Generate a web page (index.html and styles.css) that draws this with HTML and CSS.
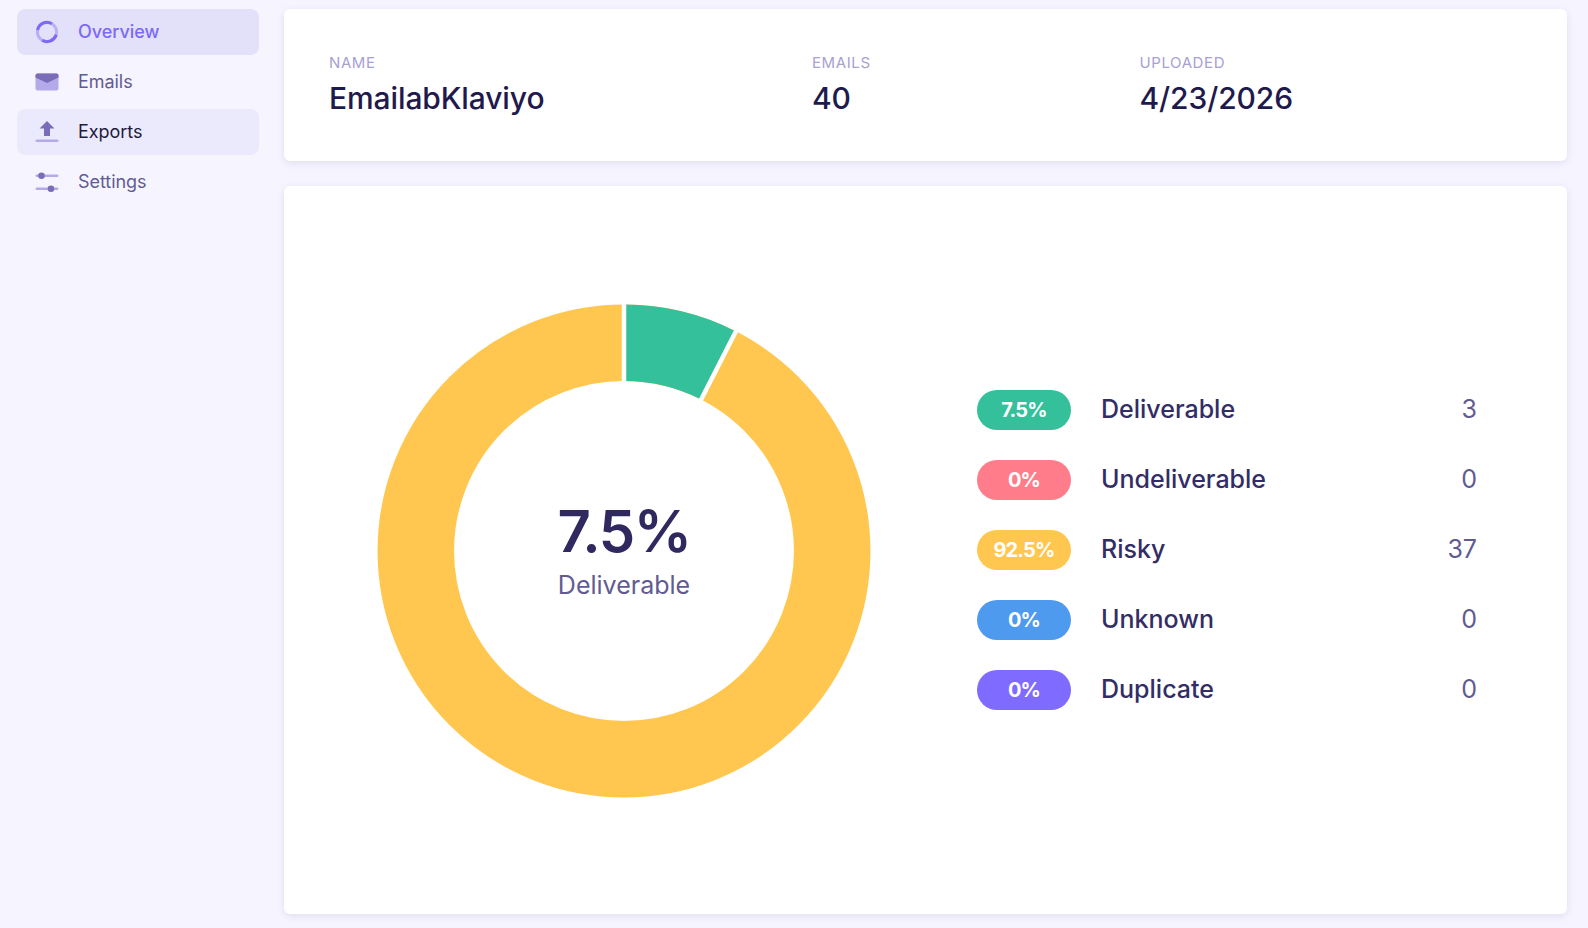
FILE: index.html
```html
<!DOCTYPE html>
<html lang="en">
<head>
<meta charset="utf-8">
<title>EmailabKlaviyo</title>
<link rel="stylesheet" href="styles.css">
</head>
<body>
<div class="app">
  <nav class="sidebar">
    <a class="nav-item active">
      <svg class="nav-icon" viewBox="0 0 24 24"><circle cx="12" cy="12" r="9.600" fill="none" stroke="#b9b0f8" stroke-width="3"/><path d="M2.600 10A9.600 9.600 0 0 1 16.800 3.700M21.200 14.800A9.600 9.600 0 0 1 7.200 20.300" fill="none" stroke="#7c69f5" stroke-width="3"/></svg>
      <span>Overview</span>
    </a>
    <a class="nav-item">
      <svg class="nav-icon" viewBox="0 0 24 24"><rect x="0.500" y="3.500" width="23" height="17" rx="2" fill="#b4aaea"/><path d="M0.500 5.500a2 2 0 0 1 2-2h19a2 2 0 0 1 2 2v2L12 13 0.500 7.500z" fill="#7a6cb8"/></svg>
      <span>Emails</span>
    </a>
    <a class="nav-item hover">
      <svg class="nav-icon" viewBox="0 0 24 24"><path d="M12 1L19.500 8.500h-4.500v7.500h-6V8.500H4.500z" fill="#7a6cb8"/><rect x="0.500" y="19.500" width="23" height="2.600" rx="1.300" fill="#b4aaea"/></svg>
      <span>Exports</span>
    </a>
    <a class="nav-item">
      <svg class="nav-icon" viewBox="0 0 24 24"><rect x="0.500" y="4.500" width="23" height="2.600" rx="1.300" fill="#b4aaea"/><circle cx="6.500" cy="5.800" r="3.300" fill="#7a6cb8"/><rect x="0.500" y="17.500" width="23" height="2.600" rx="1.300" fill="#b4aaea"/><circle cx="16" cy="18.800" r="3.300" fill="#7a6cb8"/></svg>
      <span>Settings</span>
    </a>
  </nav>
  <main class="main">
    <section class="card summary">
      <div class="field field-name"><div class="field-label">NAME</div><div class="field-value">EmailabKlaviyo</div></div>
      <div class="field field-emails"><div class="field-label">EMAILS</div><div class="field-value">40</div></div>
      <div class="field"><div class="field-label">UPLOADED</div><div class="field-value">4/23/2026</div></div>
    </section>
    <section class="card report">
      <div class="chart">
        <svg class="donut" viewBox="0 0 492 492">
          <g fill="none" stroke-width="76.500" transform="rotate(-90 246 246)">
            <circle cx="246" cy="246" r="208.200" stroke="#ffc74f"/>
            <circle cx="246" cy="246" r="208.200" stroke="#34c09a" stroke-dasharray="98.120 1308.200"/>
          </g>
          <g stroke="#fff" stroke-width="4.500">
            <line x1="246" y1="-2" x2="246" y2="80"/>
            <line x1="246" y1="80" x2="246" y2="-2" transform="rotate(27 246 246)"/>
          </g>
        </svg>
        <div class="chart-center">
          <div class="chart-value">7.5%</div>
          <div class="chart-label">Deliverable</div>
        </div>
      </div>
      <ul class="legend">
        <li class="legend-row"><span class="pill pill-green">7.5%</span><span class="legend-name">Deliverable</span><span class="legend-count">3</span></li>
        <li class="legend-row"><span class="pill pill-red">0%</span><span class="legend-name">Undeliverable</span><span class="legend-count">0</span></li>
        <li class="legend-row"><span class="pill pill-yellow">92.5%</span><span class="legend-name">Risky</span><span class="legend-count">37</span></li>
        <li class="legend-row"><span class="pill pill-blue">0%</span><span class="legend-name">Unknown</span><span class="legend-count">0</span></li>
        <li class="legend-row"><span class="pill pill-purple">0%</span><span class="legend-name">Duplicate</span><span class="legend-count">0</span></li>
      </ul>
    </section>
  </main>
</div>
</body>
</html>
```
FILE: styles.css
```css
* { box-sizing: border-box; }
html, body { margin: 0; height: 100%; }
body {
  background: #f6f5ff;
  font-family: Inter, "Noto Sans", sans-serif;
  color: #2f2960;
  overflow: hidden;
}
.app { display: flex; height: 928px; }
.sidebar {
  width: 284px;
  flex: none;
  padding: 9px 25px 0 17px;
  display: flex;
  flex-direction: column;
  gap: 4.500px;
}
.nav-item {
  height: 45.500px;
  border-radius: 8px;
  display: flex;
  align-items: center;
  gap: 19px;
  padding-left: 18px;
  font-size: 18px;
  letter-spacing: -0.050px;
  color: #625b93;
}
.nav-item.active { background: #e2e1f9; color: #7c69f5; font-weight: 500; }
.nav-item.hover { background: #ebeafd; color: #1f1b3d; }
.nav-icon { width: 24px; height: 24px; flex: none; }
.main {
  flex: 1;
  padding: 9px 21px 14px 0;
  display: flex;
  flex-direction: column;
  gap: 25px;
}
.card {
  background: #fff;
  border-radius: 6px;
  box-shadow: 0 2px 8px rgba(60, 50, 130, 0.12);
}
.summary {
  height: 152px;
  flex: none;
  display: flex;
  padding: 45px 0 0 45px;
}
.field-name { width: 483px; }
.field-emails { width: 327.500px; }
.field-label {
  font-size: 15px;
  line-height: 18px;
  color: #a9a0d3;
  letter-spacing: 0.600px;
}
.field-value {
  font-size: 30px;
  line-height: 36px;
  margin-top: 8px;
  font-weight: 500;
  letter-spacing: -0.100px;
  color: #1f1a4d;
}
.report {
  flex: 1;
  display: flex;
  align-items: center;
  padding-left: 94px;
  gap: 107px;
}
.chart { position: relative; width: 492px; height: 492px; flex: none; margin-top: 1px; }
.donut { display: block; width: 492px; height: 492px; overflow: visible; }
.chart-center {
  position: absolute;
  inset: 0;
  display: flex;
  flex-direction: column;
  align-items: center;
  justify-content: center;
}
.chart-value { font-size: 58px; line-height: 62px; font-weight: 600; color: #2f2960; letter-spacing: -1.500px; position: relative; top: -2px; }
.chart-label { font-size: 25px; line-height: 36px; color: #625b93; position: relative; top: 3px; }
.legend {
  list-style: none;
  margin: 0;
  padding: 0;
  width: 499.500px;
  display: flex;
  flex-direction: column;
  gap: 30px;
}
.legend-row { display: flex; align-items: center; height: 40px; }
.pill {
  width: 94px;
  height: 40px;
  border-radius: 20px;
  display: flex;
  align-items: center;
  justify-content: center;
  color: #fff;
  font-size: 20px;
  font-weight: 700;
  letter-spacing: -0.800px;
  flex: none;
}
.pill-green { background: #34c09a; }
.pill-red { background: #ff7d8a; }
.pill-yellow { background: #ffc74f; }
.pill-blue { background: #4d9aef; }
.pill-purple { background: #7f6bff; }
.legend-name { margin-left: 30px; font-size: 25px; font-weight: 500; flex: 1; color: #332d66; position: relative; top: -1px; }
.legend-count { font-size: 25px; color: #625b93; position: relative; top: -1px; left: 0.500px; }
```
